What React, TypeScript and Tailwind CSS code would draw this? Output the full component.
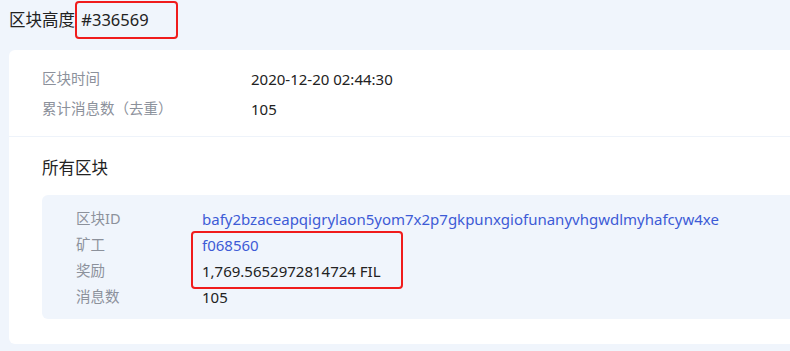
import React from "react";

const font = {
  fontFamily: '"Noto Sans", "Noto Sans CJK SC", sans-serif',
};

export default function App() {
  return (
    <div
      className="relative w-[790px] h-[351px] overflow-hidden bg-[#f0f5fc] text-[#222]"
      style={font}
    >
      <div className="pt-[8px] pl-[9px] h-[32px] text-[16.5px] leading-[24px] whitespace-nowrap">
        区块高度 <span className="ml-[2px]">#336569</span>
      </div>

      <div className="ml-[9px] mt-[18px] w-[900px] rounded-[6px] bg-white">
        <div className="pl-[33px] pt-[14px] pb-[12px] text-[14px] border-b border-[#eef3fa]">
          <div className="flex h-[30px] items-center">
            <div className="w-[209px] text-[14.5px] text-[#8c919b]">区块时间</div>
            <div className="text-[15px]">2020-12-20 02:44:30</div>
          </div>
          <div className="flex h-[30px] items-center">
            <div className="w-[209px] text-[14.5px] text-[#8c919b]">累计消息数（去重）</div>
            <div className="text-[15px]">105</div>
          </div>
        </div>

        <div className="pl-[33px] pt-[19px] pb-[25px]">
          <div className="text-[16.5px] leading-[24px]">所有区块</div>
          <div className="mt-[15px] rounded-[6px] bg-[#f0f5fc] pl-[34px] pt-[11px] pb-[9px] text-[14.5px]">
            <div className="flex h-[26px] items-center">
              <div className="w-[126px] text-[#8c919b]">区块ID</div>
              <div className="text-[15px] text-[#3d5bd6]">
                bafy2bzaceapqigrylaon5yom7x2p7gkpunxgiofunanyvhgwdlmyhafcyw4xe
              </div>
            </div>
            <div className="flex h-[26px] items-center">
              <div className="w-[126px] text-[#8c919b]">矿工</div>
              <div className="text-[15px] text-[#3d5bd6]">f068560</div>
            </div>
            <div className="flex h-[26px] items-center">
              <div className="w-[126px] text-[#8c919b]">奖励</div>
              <div className="text-[15px]">1,769.5652972814724 FIL</div>
            </div>
            <div className="flex h-[26px] items-center">
              <div className="w-[126px] text-[#8c919b]">消息数</div>
              <div className="text-[15px]">105</div>
            </div>
          </div>
        </div>
      </div>

      <div className="absolute left-[75px] top-[1px] w-[103px] h-[38px] border-2 border-[#f01c1c] rounded-[4px]" />
      <div className="absolute left-[191px] top-[231px] w-[212px] h-[58px] border-2 border-[#f01c1c] rounded-[4px]" />
    </div>
  );
}
